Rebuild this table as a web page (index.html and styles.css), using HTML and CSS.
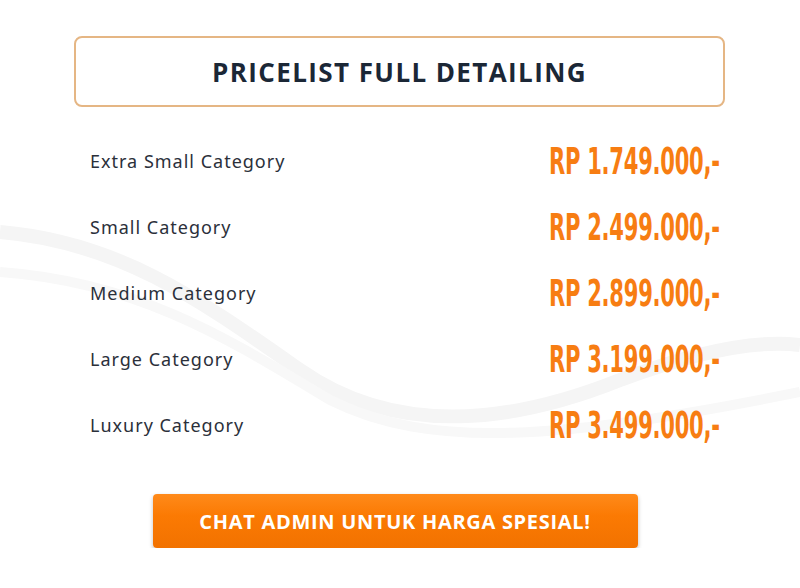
FILE: index.html
```html
<!DOCTYPE html>
<html lang="id">
<head>
  <meta charset="UTF-8" />
  <meta name="viewport" content="width=device-width, initial-scale=1.0"/>
  <title>Pricelist Full Detailing</title>
  <link rel="stylesheet" href="styles.css">
</head>
<body>
  <!-- gelombang latar -->
  <svg class="waves" width="800" height="588" viewBox="0 0 800 588">
    <path d="M0 232 C 120 242, 200 300, 300 370 C 400 440, 520 420, 620 380 C 700 350, 760 340, 800 345" fill="none" stroke="#f5f5f5" stroke-width="14"/>
    <path d="M0 272 C 140 282, 230 340, 330 400 C 430 450, 560 440, 800 392" fill="none" stroke="#f8f8f8" stroke-width="10"/>
  </svg>

  <div class="page">
    <div class="title-box">
      <h1>PRICELIST FULL DETAILING</h1>
    </div>

    <ul class="prices">
      <li><span class="label">Extra Small Category</span><span class="price">RP 1.749.000,-</span></li>
      <li><span class="label">Small Category</span><span class="price">RP 2.499.000,-</span></li>
      <li><span class="label">Medium Category</span><span class="price">RP 2.899.000,-</span></li>
      <li><span class="label">Large Category</span><span class="price">RP 3.199.000,-</span></li>
      <li><span class="label">Luxury Category</span><span class="price">RP 3.499.000,-</span></li>
    </ul>

    <div class="cta-wrap">
      <a class="cta" href="#">CHAT ADMIN UNTUK HARGA SPESIAL!</a>
    </div>
  </div>
</body>
</html>
```

FILE: styles.css
```css
body {
  margin: 0;
  background-color: #fff;
  font-family: "Noto Sans", Arial, sans-serif;
  overflow: hidden;
}
.waves {
  position: absolute;
  left: 0;
  top: 0;
  z-index: 0;
}
.page {
  position: relative;
  z-index: 1;
  padding: 36px 75px 0 74px;
}
.title-box {
  height: 67px;
  border: 2px solid #e5b684;
  border-radius: 8px;
  display: flex;
  align-items: center;
  justify-content: center;
}
h1 {
  margin: 0;
  font-family: "Open Sans", sans-serif;
  font-weight: 700;
  font-size: 26px;
  letter-spacing: 1.4px;
  color: #1b2736;
}
.prices {
  list-style: none;
  margin: 0;
  padding: 42px 0 0 16px;
}
.prices li {
  height: 66px;
  display: flex;
  align-items: flex-start;
  justify-content: space-between;
}
.label {
  font-family: "Noto Sans", sans-serif;
  font-size: 18px;
  color: #2b303a;
  letter-spacing: 1px;
  line-height: 24px;
}
.price {
  display: inline-block;
  width: 176px;
  font-family: "DejaVu Sans", sans-serif;
  font-weight: 700;
  font-size: 38px;
  line-height: 40px;
  margin-top: -8px;
  color: #f77d12;
  white-space: nowrap;
  transform: scaleX(0.555);
  transform-origin: left center;
  letter-spacing: -0.5px;
}
.cta-wrap {
  display: flex;
  justify-content: center;
  padding-top: 15px;
  padding-right: 9px;
}
.cta {
  display: flex;
  align-items: center;
  justify-content: center;
  width: 485px;
  height: 54px;
  border-radius: 4px;
  background: linear-gradient(#ff8a1a, #fb7a03 40%, #f27200);
  box-shadow: 0 2px 4px rgba(0,0,0,0.25);
  color: #fff;
  text-decoration: none;
  font-family: "Open Sans", sans-serif;
  font-weight: 700;
  font-size: 20px;
  letter-spacing: 0.7px;
}
```
